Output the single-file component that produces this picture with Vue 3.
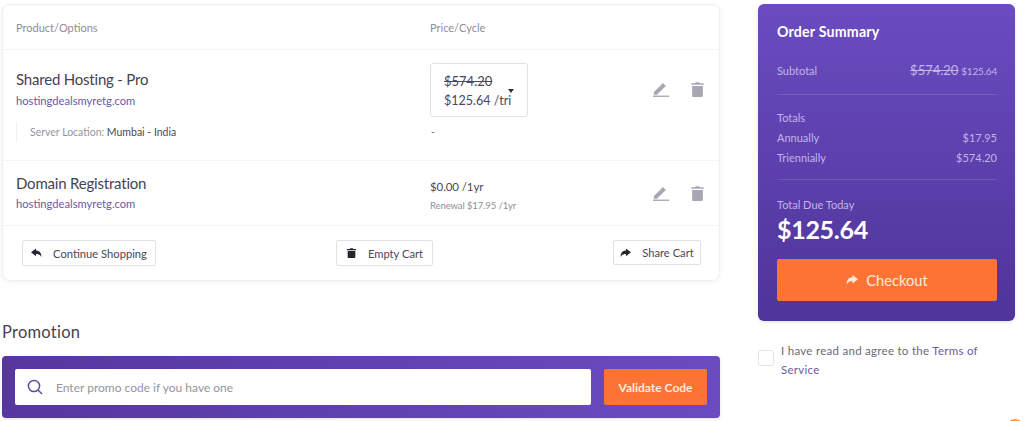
<script setup>
const items = [
  { name: 'Shared Hosting - Pro', domain: 'hostingdealsmyretg.com' },
  { name: 'Domain Registration', domain: 'hostingdealsmyretg.com' }
]
</script>

<template>
  <div class="page">
    <div class="left">
      <section class="card">
        <div class="head">
          <span class="c1">Product/Options</span>
          <span class="c2">Price/Cycle</span>
        </div>
        <div class="row row1">
          <div class="main">
            <div class="c1">
              <div class="name">{{ items[0].name }}</div>
              <div class="domain">{{ items[0].domain }}</div>
            </div>
            <div class="c2">
              <div class="select">
                <div class="sel-text">
                  <s>$574.20</s>
                  <span>$125.64 /tri</span>
                </div>
                <i class="caret"></i>
              </div>
            </div>
            <div class="actions">
              <svg class="ic" viewBox="0 0 18 18"><path d="M1 11.6 10.6 2.2l3 3L4.2 14.6H1z" /><rect x="0" y="15.4" width="17" height="1.5" /></svg>
              <svg class="ic" viewBox="0 0 18 18"><path d="M2.5 2.4h4l.8-1.2h3.4l.8 1.2h4v1.7h-13zM3.3 5.2h11.4v10.4c0 .8-.6 1.4-1.4 1.4H4.7c-.8 0-1.4-.6-1.4-1.4z" /></svg>
            </div>
          </div>
          <div class="opt">
            <div class="c1 opt-text"><span class="opt-label">Server Location:</span> Mumbai - India</div>
            <div class="c2 dash">-</div>
          </div>
        </div>
        <div class="row row2">
          <div class="main">
            <div class="c1">
              <div class="name">{{ items[1].name }}</div>
              <div class="domain">{{ items[1].domain }}</div>
            </div>
            <div class="c2 price2">
              <div class="p">$0.00 /1yr</div>
              <div class="renew">Renewal $17.95 /1yr</div>
            </div>
            <div class="actions">
              <svg class="ic" viewBox="0 0 18 18"><path d="M1 11.6 10.6 2.2l3 3L4.2 14.6H1z" /><rect x="0" y="15.4" width="17" height="1.5" /></svg>
              <svg class="ic" viewBox="0 0 18 18"><path d="M2.5 2.4h4l.8-1.2h3.4l.8 1.2h4v1.7h-13zM3.3 5.2h11.4v10.4c0 .8-.6 1.4-1.4 1.4H4.7c-.8 0-1.4-.6-1.4-1.4z" /></svg>
            </div>
          </div>
        </div>
        <div class="foot">
          <button class="btn cont">
            <svg viewBox="0 0 12 10"><path d="M5.5 0 0 4.3l5.5 4.3V6c2.6 0 4.4.6 5.8 3.4C11.6 5 9 2.2 5.5 2.2z" /></svg>
            Continue Shopping
          </button>
          <button class="btn empty">
            <svg viewBox="0 0 10 11"><path d="M0 1.2h3L3.5.3h3l.5.9h3v1.2H0zM.8 3.2h8.4v6.6c0 .7-.5 1.2-1.2 1.2H2c-.7 0-1.2-.5-1.2-1.2z" /></svg>
            Empty Cart
          </button>
          <button class="btn share">
            <svg viewBox="0 0 12 10"><path d="M6.5 0 12 4.3 6.5 8.6V6C3.9 6 2.1 6.6.7 9.4.4 5 3 2.2 6.5 2.2z" /></svg>
            Share Cart
          </button>
        </div>
      </section>
      <h2 class="promo-title">Promotion</h2>
      <div class="promo">
        <div class="promo-input">
          <svg viewBox="0 0 16 16"><circle cx="7" cy="7" r="5.6" /><path d="m11 11 4 4" /></svg>
          <span>Enter promo code if you have one</span>
        </div>
        <button class="validate">Validate Code</button>
      </div>
    </div>
    <aside class="right">
      <div class="summary">
        <h3>Order Summary</h3>
        <div class="line sub">
          <span>Subtotal</span>
          <span><s>$574.20</s> <small>$125.64</small></span>
        </div>
        <div class="totals">
          <div class="tt">Totals</div>
          <div class="line"><span>Annually</span><span>$17.95</span></div>
          <div class="line"><span>Triennially</span><span>$574.20</span></div>
        </div>
        <div class="due">
          <div class="due-l">Total Due Today</div>
          <div class="due-v">$125.64</div>
        </div>
        <button class="checkout">
          <svg viewBox="0 0 12 10"><path d="M6.5 0 12 4.3 6.5 8.6V6C3.9 6 2.1 6.6.7 9.4.4 5 3 2.2 6.5 2.2z" /></svg>
          Checkout
        </button>
      </div>
      <label class="terms">
        <span class="box"></span>
        <span class="terms-t">I have read and agree to the <a>Terms of</a> <a>Service</a></span>
      </label>
    </aside>
    <div class="blip"></div>
  </div>
</template>

<style scoped>
.page {
  position: relative;
  width: 1024px;
  height: 421px;
  overflow: hidden;
  background: #fff;
  font-family: Lato, "Noto Sans", sans-serif;
  color: #4a4858;
  display: grid;
  grid-template-columns: 718px 257px;
  column-gap: 38px;
  padding: 4px 0 0 2px;
  box-sizing: border-box;
}
.card {
  height: 277px;
  box-sizing: border-box;
  border: 1px solid #eef0f3;
  border-radius: 8px;
  box-shadow: 0 1px 4px rgba(40, 40, 70, .07);
}
.head, .main, .opt { display: flex; }
.c1 { width: 414px; flex: none; }
.c2 { flex: 1; }
.head {
  height: 45px;
  align-items: center;
  padding-left: 13px;
  font-size: 11px;
  color: #8d8e98;
  border-bottom: 1px solid #f3f4f6;
  box-sizing: border-box;
}
.row { padding-left: 13px; box-sizing: border-box; border-bottom: 1px solid #f3f4f6; }
.row1 { height: 111px; padding-top: 13px; }
.row2 { height: 65px; padding-top: 12px; }
.main { position: relative; align-items: flex-start; }
.name { font-size: 15px; line-height: 20px; margin-top: 6px; color: #45434f; letter-spacing: -.2px; }
.row2 .name { margin-top: 0; }
.domain { font-size: 11.2px; line-height: 16px; margin-top: 4px; color: #6a5aa5; }
.row2 .domain { margin-top: 3px; }
.select {
  width: 98px;
  height: 54px;
  box-sizing: border-box;
  border: 1px solid #dfe1e6;
  border-radius: 3px;
  padding: 8px 0 0 13px;
  position: relative;
  font-size: 12.5px;
  color: #4a4858;
}
.sel-text { display: flex; flex-direction: column; gap: 2px; line-height: 18px; }
.sel-text s { font-size: 13px; }
.caret {
  position: absolute;
  right: 13px;
  top: 25px;
  border: 3.5px solid transparent;
  border-top: 4px solid #2f2d3a;
  border-bottom: 0;
}
.actions {
  position: absolute;
  right: 13px;
  top: 18px;
  display: flex;
  gap: 19px;
}
.row2 .actions { top: 12px; }
.ic { width: 17px; height: 17px; fill: #a8a8b2; display: block; }
.opt { margin-top: 5px; font-size: 10.5px; }
.opt-text { margin-top: 0; border-left: 1px solid #f0f1f4; padding-left: 13px; height: 20px; line-height: 20px; width: 401px; box-sizing: content-box; flex: none; }
.opt-label { color: #95959f; }
.dash { padding-left: 0; line-height: 20px; color: #777; }
.price2 .p { font-size: 11.5px; letter-spacing: -.1px; line-height: 18px; margin-top: 5px; }
.renew { font-size: 9.5px; letter-spacing: -.1px; line-height: 14px; margin-top: 3px; color: #8f8f99; }
.foot {
  height: 54px;
  padding: 14px 18px 0 19px;
  display: flex;
  align-items: flex-start;
  justify-content: space-between;
  box-sizing: border-box;
}
.btn {
  height: 26px;
  padding: 0;
  background: #fff;
  border: 1px solid #dfe1e6;
  border-radius: 2px;
  font: inherit;
  font-size: 11.2px;
  color: #4a4858;
  display: flex;
  align-items: center;
  justify-content: center;
  gap: 11px;
  box-sizing: border-box;
}
.btn svg { width: 11px; height: 10px; fill: #26242f; flex: none; }
.cont { width: 134px; }
.empty { width: 97px; }
.share { width: 88px; height: 25px; }
.promo-title {
  margin: 0;
  padding-top: 40px;
  font-size: 16.5px;
  line-height: 22px;
  font-weight: 400;
  color: #45434f;
  letter-spacing: .25px;
}
.promo {
  margin-top: 13px;
  height: 62px;
  border-radius: 4px;
  background: linear-gradient(90deg, #56379f, #6a4cc0);
  padding: 13px;
  box-sizing: border-box;
  display: flex;
  gap: 13px;
  box-shadow: 0 1px 3px rgba(40, 40, 70, .15);
}
.promo-input {
  flex: 1;
  height: 36px;
  background: #fff;
  border-radius: 2px;
  display: flex;
  align-items: center;
  padding-left: 12px;
  gap: 13px;
  font-size: 12px;
  color: #94949e;
}
.promo-input svg { width: 16px; height: 16px; fill: none; stroke: #5f4b9c; stroke-width: 1.5; }
.validate {
  width: 103px;
  height: 36px;
  border: 0;
  border-radius: 2px;
  background: #fb7436;
  color: #ffe9dc;
  font: inherit;
  font-size: 12px;
  font-weight: 700;
}
.summary {
  height: 317px;
  box-sizing: border-box;
  border-radius: 6px;
  padding: 19px 18px 0 19px;
  color: #c3b4ea;
  background: linear-gradient(180deg, #6a4cc0, #4f3499);
  font-size: 11px;
  box-shadow: 0 1px 3px rgba(40, 40, 70, .15);
}
.summary h3 {
  margin: 0;
  font-size: 14.2px;
  line-height: 18px;
  color: #fff;
  font-weight: 700;
  letter-spacing: .2px;
}
.line { display: flex; justify-content: space-between; align-items: baseline; line-height: 19.5px; }
.sub {
  margin-top: 20px;
  height: 33px;
  border-bottom: 1px solid rgba(255, 255, 255, .12);
  box-sizing: content-box;
}
.sub s { font-size: 13px; }
.sub small { font-size: 10px; letter-spacing: -.2px; }
.totals { padding: 13px 0 12px; border-bottom: 1px solid rgba(255, 255, 255, .12); }
.tt { line-height: 20px; }
.due { padding-top: 17px; }
.due-l { line-height: 16px; }
.due-v { font-size: 25px; letter-spacing: -.3px; line-height: 32px; margin-top: 0; color: #fff; font-weight: 700; }
.checkout {
  margin-top: 14px;
  width: 100%;
  height: 42px;
  border: 0;
  border-radius: 2px;
  background: #fb7436;
  color: #ffe9dc;
  font: inherit;
  font-size: 14.7px;
  display: flex;
  align-items: center;
  justify-content: center;
  gap: 8px;
}
.checkout svg { width: 12px; height: 10px; fill: #ffe9dc; }
.terms {
  margin-top: 20px;
  display: flex;
  align-items: flex-start;
  gap: 7px;
  font-size: 11.5px;
  line-height: 19px;
  color: #6a6877;
}
.box {
  width: 16px;
  height: 16px;
  margin-top: 9px;
  flex: none;
  border: 1px solid #e3e4e8;
  border-radius: 3px;
  box-sizing: border-box;
}
.terms-t { width: 215px; letter-spacing: .28px; }
.terms a { color: #6a5aa5; }
.blip {
  position: absolute;
  right: 2px;
  bottom: -9px;
  width: 14px;
  height: 11px;
  border-radius: 50%;
  background: #f89a4e;
}
</style>
